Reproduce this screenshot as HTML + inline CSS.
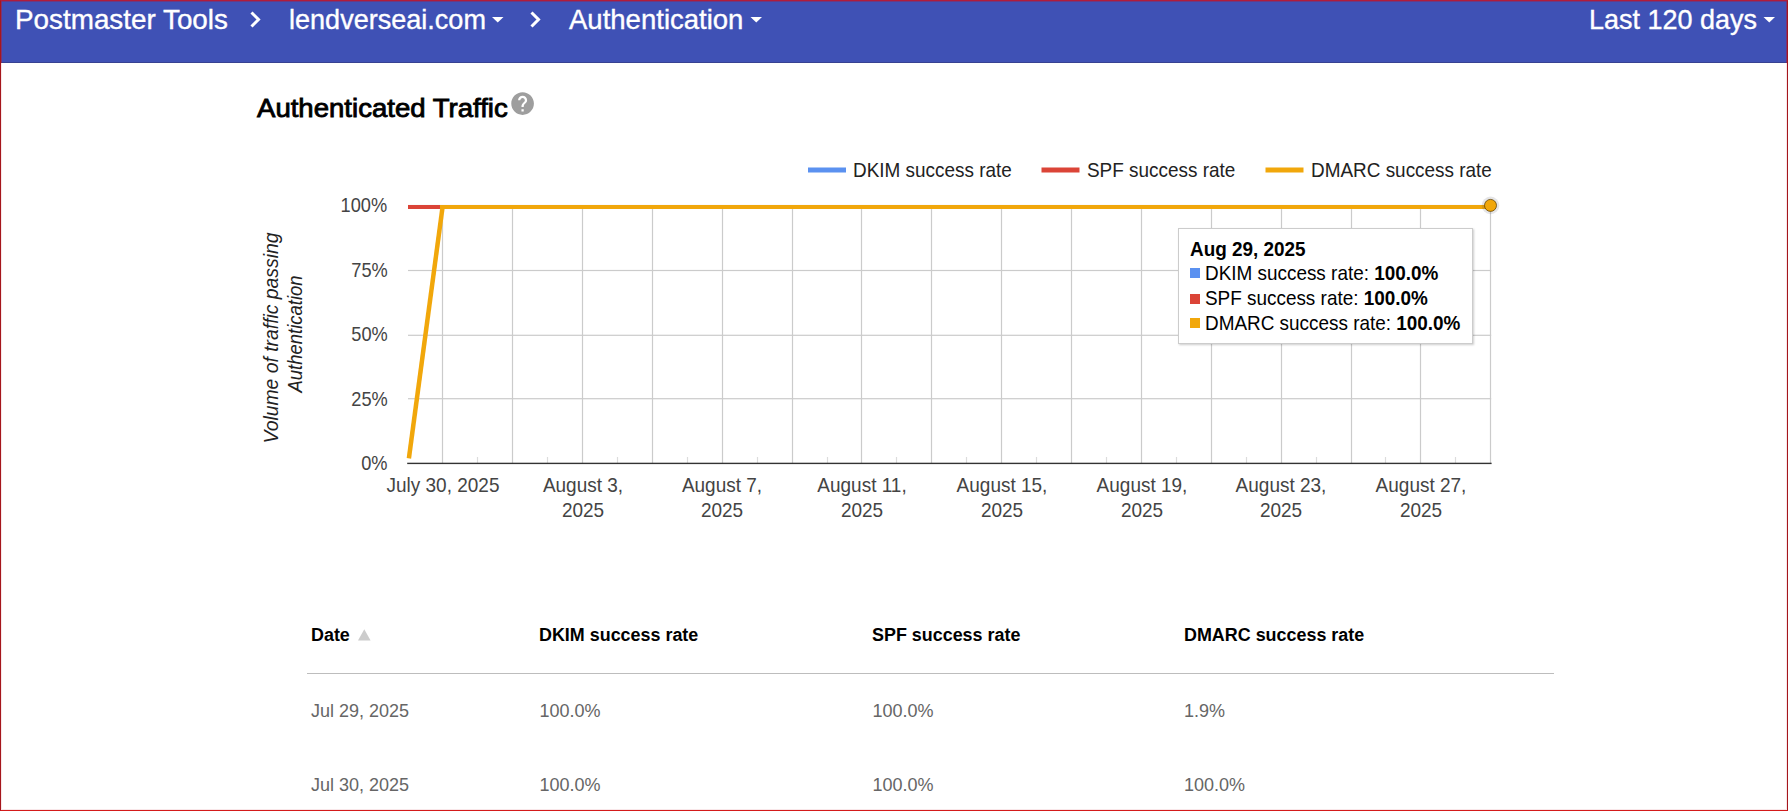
<!DOCTYPE html>
<html><head><meta charset="utf-8">
<style>
html,body{margin:0;padding:0;}
body{width:1788px;height:811px;overflow:hidden;background:#fff;position:relative;font-family:"Liberation Sans",sans-serif;}
.abs{position:absolute;white-space:nowrap;}
#hdr{position:absolute;left:0;top:0;width:1788px;height:63px;background:#3f51b5;box-shadow:inset 0 -1px 0 rgba(40,40,80,0.35);}
.ht{position:absolute;top:3.5px;height:32px;line-height:32px;font-size:27.2px;color:#fff;white-space:nowrap;transform-origin:0 50%;-webkit-text-stroke:0.35px #fff;}
#frame{position:absolute;left:0;top:0;width:1786px;height:809px;border:1px solid #a5161c;border-top-color:#b01c3c;border-bottom-color:#d41a1a;box-shadow:inset 0 0 0 1px rgba(184,20,42,0.10);z-index:10;pointer-events:none;}
.c{position:absolute;font-size:20.4px;white-space:nowrap;line-height:22px;height:22px;}
.ax{color:#444;transform:scaleX(0.931);}
.yl{transform-origin:100% 50%;transform:scaleX(0.8938);}
.xc{transform-origin:50% 50%;width:200px;text-align:center;}
.lg{color:#222;transform:scaleX(0.9282);transform-origin:0 50%;}
.tt{color:#000;transform:scaleX(0.9273);transform-origin:0 50%;}
.yt{color:#222;font-style:italic;}
.th{position:absolute;font-size:17.6px;transform:scaleX(1.018);transform-origin:0 50%;font-weight:bold;color:#000;white-space:nowrap;line-height:22px;top:624px;}
.td{position:absolute;font-size:18px;color:#666;white-space:nowrap;line-height:22px;}
#tip{position:absolute;left:1178px;top:228px;width:293px;height:114.3px;background:#fff;border:1px solid #ccc;box-shadow:0.5px 1px 2px rgba(0,0,0,0.2);}
</style></head><body>
<div id="hdr">
<span class="ht" id="h1" style="left:15.2px;transform:scaleX(1.0237)">Postmaster Tools</span>
<span class="ht" id="h2" style="left:289px;transform:scaleX(0.9947)">lendverseai.com</span>
<span class="ht" id="h3" style="left:568.9px;transform:scaleX(1.0123)">Authentication</span>
<span class="ht" id="h4" style="left:1589.4px;transform:scaleX(0.9922)">Last 120 days</span>
<svg class="abs" style="left:0;top:0" width="1788" height="62">
<g fill="none" stroke="#fff" stroke-width="3">
<path d="M251.5 12.5 L258.5 19.5 L251.5 26.5"/>
<path d="M531.5 12.5 L538.5 19.5 L531.5 26.5"/>
</g>
<g fill="#fff">
<path d="M492 17 L503.5 17 L497.75 22.6 Z"/>
<path d="M750.5 17 L762 17 L756.25 22.6 Z"/>
<path d="M1763.5 17 L1775 17 L1769.25 22.6 Z"/>
</g>
</svg>
</div>
<div class="abs" id="title" style="left:256.8px;top:92px;font-size:26px;color:#000;line-height:32px;-webkit-text-stroke:0.85px #000;transform-origin:0 50%;transform:scaleX(1.06);">Authenticated Traffic</div>
<svg class="abs" id="help" style="left:508.8px;top:89.7px" width="27.2" height="27.2" viewBox="0 0 24 24"><path fill="#9e9e9e" d="M12 2C6.48 2 2 6.48 2 12s4.48 10 10 10 10-4.48 10-10S17.52 2 12 2zm1 17h-2v-2h2v2zm2.07-7.75l-.9.92C13.45 12.9 13 13.5 13 15h-2v-.5c0-1.1.45-2.1 1.17-2.83l1.24-1.26c.37-.36.59-.86.59-1.41 0-1.1-.9-2-2-2s-2 .9-2 2H8c0-2.21 1.79-4 4-4s4 1.79 4 4c0 .88-.36 1.68-.93 2.25z"/></svg>
<svg class="abs" id="chart" style="left:0;top:0" width="1788" height="811">
<rect x="408.0" y="204.9" width="1083.2" height="1.2" fill="#cbcbcb"/>
<rect x="408.0" y="269.9" width="1083.2" height="1.2" fill="#cbcbcb"/>
<rect x="408.0" y="334.7" width="1083.2" height="1.2" fill="#cbcbcb"/>
<rect x="408.0" y="398.09999999999997" width="1083.2" height="1.2" fill="#cbcbcb"/>
<rect x="441.9" y="205" width="1.2" height="258.4" fill="#cbcbcb"/>
<rect x="511.9" y="205" width="1.2" height="258.4" fill="#cbcbcb"/>
<rect x="581.9" y="205" width="1.2" height="258.4" fill="#cbcbcb"/>
<rect x="651.9" y="205" width="1.2" height="258.4" fill="#cbcbcb"/>
<rect x="721.9" y="205" width="1.2" height="258.4" fill="#cbcbcb"/>
<rect x="791.9" y="205" width="1.2" height="258.4" fill="#cbcbcb"/>
<rect x="860.9" y="205" width="1.2" height="258.4" fill="#cbcbcb"/>
<rect x="930.9" y="205" width="1.2" height="258.4" fill="#cbcbcb"/>
<rect x="1000.9" y="205" width="1.2" height="258.4" fill="#cbcbcb"/>
<rect x="1070.9" y="205" width="1.2" height="258.4" fill="#cbcbcb"/>
<rect x="1140.9" y="205" width="1.2" height="258.4" fill="#cbcbcb"/>
<rect x="1210.9" y="205" width="1.2" height="258.4" fill="#cbcbcb"/>
<rect x="1280.9" y="205" width="1.2" height="258.4" fill="#cbcbcb"/>
<rect x="1350.9" y="205" width="1.2" height="258.4" fill="#cbcbcb"/>
<rect x="1419.9" y="205" width="1.2" height="258.4" fill="#cbcbcb"/>
<rect x="1489.9" y="205" width="1.2" height="258.4" fill="#cbcbcb"/>
<rect x="476.9" y="457" width="1.2" height="6.4" fill="#dcdcdc"/>
<rect x="546.9" y="457" width="1.2" height="6.4" fill="#dcdcdc"/>
<rect x="616.9" y="457" width="1.2" height="6.4" fill="#dcdcdc"/>
<rect x="686.9" y="457" width="1.2" height="6.4" fill="#dcdcdc"/>
<rect x="756.9" y="457" width="1.2" height="6.4" fill="#dcdcdc"/>
<rect x="826.9" y="457" width="1.2" height="6.4" fill="#dcdcdc"/>
<rect x="895.9" y="457" width="1.2" height="6.4" fill="#dcdcdc"/>
<rect x="965.9" y="457" width="1.2" height="6.4" fill="#dcdcdc"/>
<rect x="1035.9" y="457" width="1.2" height="6.4" fill="#dcdcdc"/>
<rect x="1105.9" y="457" width="1.2" height="6.4" fill="#dcdcdc"/>
<rect x="1175.9" y="457" width="1.2" height="6.4" fill="#dcdcdc"/>
<rect x="1245.9" y="457" width="1.2" height="6.4" fill="#dcdcdc"/>
<rect x="1315.9" y="457" width="1.2" height="6.4" fill="#dcdcdc"/>
<rect x="1384.9" y="457" width="1.2" height="6.4" fill="#dcdcdc"/>
<rect x="1454.9" y="457" width="1.2" height="6.4" fill="#dcdcdc"/>
<rect x="407.2" y="462.7" width="1084.3999999999999" height="1.4" fill="#333"/>
<path d="M408 207 L1491 207" stroke="#5b91f0" stroke-width="4" fill="none"/>
<path d="M408 207 L1491 207" stroke="#db4437" stroke-width="4" fill="none"/>
<path d="M408.9 458.4 L442.5 207.5" stroke="#f1a70b" stroke-width="4.5" fill="none"/>
<path d="M440 207 L1491 207" stroke="#f1a70b" stroke-width="4" fill="none"/>
<circle cx="1490.5" cy="205.4" r="8.8" fill="#334" opacity="0.13"/>
<circle cx="1490.5" cy="205.4" r="6" fill="#f1a70b" stroke="#5a3d00" stroke-opacity="0.75" stroke-width="1"/>
<rect x="808" y="167.5" width="38" height="5" fill="#5b91f0"/>
<rect x="1041.5" y="167.5" width="38" height="5" fill="#db4437"/>
<rect x="1265.5" y="167.5" width="38" height="5" fill="#f1a70b"/>
</svg>
<div class="c lg" style="left:853px;top:158.74px">DKIM success rate</div>
<div class="c lg" style="left:1086.5px;top:158.74px">SPF success rate</div>
<div class="c lg" style="left:1310.5px;top:158.74px">DMARC success rate</div>
<div class="c ax yl" style="right:1400.5px;top:193.94px">100%</div>
<div class="c ax yl" style="right:1400.5px;top:258.54px">75%</div>
<div class="c ax yl" style="right:1400.5px;top:322.94px">50%</div>
<div class="c ax yl" style="right:1400.5px;top:388.24px">25%</div>
<div class="c ax yl" style="right:1400.5px;top:451.54px">0%</div>
<div class="c ax xc" style="left:342.9px;top:474.34px">July 30, 2025</div>
<div class="c ax xc" style="left:482.7px;top:474.34px">August 3,</div>
<div class="c ax xc" style="left:482.7px;top:499.34px">2025</div>
<div class="c ax xc" style="left:622.4px;top:474.34px">August 7,</div>
<div class="c ax xc" style="left:622.4px;top:499.34px">2025</div>
<div class="c ax xc" style="left:762.2px;top:474.34px">August 11,</div>
<div class="c ax xc" style="left:762.2px;top:499.34px">2025</div>
<div class="c ax xc" style="left:901.9px;top:474.34px">August 15,</div>
<div class="c ax xc" style="left:901.9px;top:499.34px">2025</div>
<div class="c ax xc" style="left:1041.6px;top:474.34px">August 19,</div>
<div class="c ax xc" style="left:1041.6px;top:499.34px">2025</div>
<div class="c ax xc" style="left:1181.4px;top:474.34px">August 23,</div>
<div class="c ax xc" style="left:1181.4px;top:499.34px">2025</div>
<div class="c ax xc" style="left:1321.1px;top:474.34px">August 27,</div>
<div class="c ax xc" style="left:1321.1px;top:499.34px">2025</div>
<div class="c yt" style="left:271.34px;top:337.7px;transform:translate(-50%,-50%) rotate(-90deg) scaleX(0.9478);">Volume of traffic passing</div>
<div class="c yt" style="left:295.44px;top:334.2px;transform:translate(-50%,-50%) rotate(-90deg) scaleX(0.9059);">Authentication</div>
<div id="tip"></div>
<div class="c tt" style="left:1190.4px;top:237.54px;font-weight:bold">Aug 29, 2025</div>
<div class="abs" style="left:1190.2px;top:268.0px;width:9.7px;height:10px;background:#5b91f0"></div>
<div class="c tt" style="left:1204.6px;top:261.94px">DKIM success rate: <b>100.0%</b></div>
<div class="abs" style="left:1190.2px;top:293.7px;width:9.7px;height:10px;background:#db4437"></div>
<div class="c tt" style="left:1204.6px;top:286.84px">SPF success rate: <b>100.0%</b></div>
<div class="abs" style="left:1190.2px;top:318.0px;width:9.7px;height:10px;background:#f1a70b"></div>
<div class="c tt" style="left:1204.6px;top:311.64px">DMARC success rate: <b>100.0%</b></div>
<div class="th" style="left:311px">Date</div>
<svg class="abs" style="left:357px;top:628px" width="15" height="14"><path d="M1 12.5 L7.3 1.2 L13.6 12.5 Z" fill="#ccc"/></svg>
<div class="th" style="left:539px">DKIM success rate</div>
<div class="th" style="left:872px">SPF success rate</div>
<div class="th" style="left:1183.5px">DMARC success rate</div>
<div class="abs" style="left:307px;top:673px;width:1247px;height:1px;background:#bdbdbd"></div>
<div class="td" style="left:311px;top:700px">Jul 29, 2025</div>
<div class="td" style="left:539.5px;top:700px">100.0%</div>
<div class="td" style="left:872.5px;top:700px">100.0%</div>
<div class="td" style="left:1184px;top:700px">1.9%</div>
<div class="td" style="left:311px;top:774px">Jul 30, 2025</div>
<div class="td" style="left:539.5px;top:774px">100.0%</div>
<div class="td" style="left:872.5px;top:774px">100.0%</div>
<div class="td" style="left:1184px;top:774px">100.0%</div>
<div class="abs" style="left:1px;top:1px;width:1px;height:62px;background:rgba(170,30,70,0.5);z-index:11"></div><div class="abs" style="left:1786px;top:1px;width:1px;height:62px;background:rgba(170,30,70,0.5);z-index:11"></div><div class="abs" style="left:1px;top:1px;width:1786px;height:1px;background:rgba(170,30,70,0.35);z-index:11"></div>
<div id="frame"></div>
</body></html>
